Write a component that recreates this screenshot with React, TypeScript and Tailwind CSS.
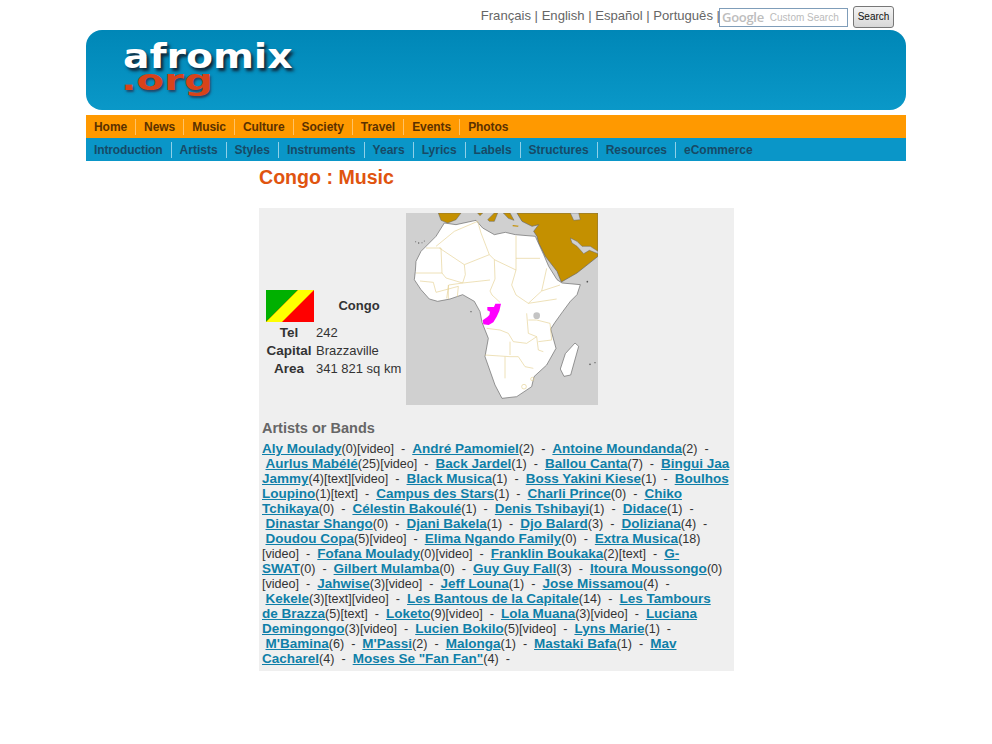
const languages = ['Français', 'English', 'Español', 'Português']
const mainMenu = ['Home', 'News', 'Music', 'Culture', 'Society', 'Travel', 'Events', 'Photos']
const subMenu = ['Introduction', 'Artists', 'Styles', 'Instruments', 'Years', 'Lyrics', 'Labels', 'Structures', 'Resources', 'eCommerce']

const artists: [string, string][] = [
  ['Aly Moulady', '(0)[video]'],
  ['André Pamomiel', '(2)'],
  ['Antoine Moundanda', '(2)'],
  ['Aurlus Mabélé', '(25)[video]'],
  ['Back Jardel', '(1)'],
  ['Ballou Canta', '(7)'],
  ['Bingui Jaa Jammy', '(4)[text][video]'],
  ['Black Musica', '(1)'],
  ['Boss Yakini Kiese', '(1)'],
  ['Boulhos Loupino', '(1)[text]'],
  ['Campus des Stars', '(1)'],
  ['Charli Prince', '(0)'],
  ['Chiko Tchikaya', '(0)'],
  ['Célestin Bakoulé', '(1)'],
  ['Denis Tshibayi', '(1)'],
  ['Didace', '(1)'],
  ['Dinastar Shango', '(0)'],
  ['Djani Bakela', '(1)'],
  ['Djo Balard', '(3)'],
  ['Doliziana', '(4)'],
  ['Doudou Copa', '(5)[video]'],
  ['Elima Ngando Family', '(0)'],
  ['Extra Musica', '(18)[video]'],
  ['Fofana Moulady', '(0)[video]'],
  ['Franklin Boukaka', '(2)[text]'],
  ['G-SWAT', '(0)'],
  ['Gilbert Mulamba', '(0)'],
  ['Guy Guy Fall', '(3)'],
  ['Itoura Moussongo', '(0)[video]'],
  ['Jahwise', '(3)[video]'],
  ['Jeff Louna', '(1)'],
  ['Jose Missamou', '(4)'],
  ['Kekele', '(3)[text][video]'],
  ['Les Bantous de la Capitale', '(14)'],
  ['Les Tambours de\u00a0Brazza', '(5)[text]'],
  ['Loketo', '(9)[video]'],
  ['Lola Muana', '(3)[video]'],
  ['Luciana Demingongo', '(3)[video]'],
  ['Lucien Bokilo', '(5)[video]'],
  ['Lyns Marie', '(1)'],
  ["M'Bamina", '(6)'],
  ["M'Passi", '(2)'],
  ['Malonga', '(1)'],
  ['Mastaki Bafa', '(1)'],
  ['Mav Cacharel', '(4)'],
  ['Moses Se "Fan Fan"', '(4)'],
]

function AfricaMap() {
  return (
    <svg viewBox="18 24 576 576" className="w-[192px] h-[192px] block shrink-0">
      <rect x="18" y="24" width="576" height="576" fill="#d0d0d0" />
      {/* Middle East and Europe */}
      <path d="M351 24 L594 24 L594 154 L531 204 L484 231 L471 199 L436 154 L416 114 L411 94 L401 79 L416 59 L396 64 L366 49 Z" fill="#c49000" stroke="#666" strokeWidth="2" />
      <path d="M511 99 L531 109 L546 124 L571 124 L594 139 L594 146 L568 136 L551 146 L531 124 L516 114 Z" fill="#d0d0d0" stroke="#666" strokeWidth="1.5" />
      <path d="M511 24 L536 24 L541 44 L521 46 Z" fill="#d0d0d0" stroke="#666" strokeWidth="1.5" />
      <path d="M115 24 L183 24 L168 44 L143 54 L123 46 Z" fill="#c49000" stroke="#666" strokeWidth="1.5" />
      <path d="M233 24 L248 24 L240 32 Z" fill="#c49000" stroke="#666" strokeWidth="1.5" />
      <path d="M263 44 L283 24 L293 24 L283 49 L268 49 Z" fill="#c49000" stroke="#666" strokeWidth="1.5" />
      <path d="M310 24 L330 24 L342 46 L325 40 Z" fill="#c49000" stroke="#666" strokeWidth="1.5" />
      <path d="M338 60 L356 62 L354 65 L338 64 Z" fill="#c49000" />
      {/* Africa */}
      <path
        d="M133 54 L168 59 L228 46 L248 69 L283 89 L316 82 L346 89 L406 94 L414 112 L431 149 L446 184 L471 224 L486 234 L541 239 L531 269 L511 289 L488 320 L465 352 L452 372 L468 430 L440 480 L402 515 L395 545 L350 575 L306 580 L285 540 L255 455 L265 400 L246 352 L240 320 L223 289 L188 269 L150 282 L113 289 L88 282 L63 254 L43 224 L46 199 L48 169 L63 139 L88 114 L108 94 Z"
        fill="#ffffff"
        stroke="#666"
        strokeWidth="2"
      />
      <path d="M525 414 L536 424 L512 510 L492 514 L481 492 L496 446 Z" fill="#ffffff" stroke="#666" strokeWidth="2" />
      {/* Islands */}
      <g fill="#555">
        <circle cx="47" cy="110" r="1.5" />
        <circle cx="56" cy="114" r="2" />
        <circle cx="66" cy="113" r="1.5" />
        <circle cx="73" cy="108" r="1.5" />
        <circle cx="570" cy="478" r="2.5" />
        <circle cx="585" cy="473" r="2" />
        <circle cx="562" cy="230" r="2.5" />
        <circle cx="213" cy="320" r="2" />
      </g>
      {/* Borders */}
      <g fill="none" stroke="#e6d196" strokeWidth="2">
        <path d="M108 124 L163 79 L233 49" />
        <path d="M118 129 L193 179 L268 149 L243 84 L233 49" />
        <path d="M78 129 L123 129 L126 204 L48 204" />
        <path d="M193 179 L196 209 L188 234 L146 240 L140 280" />
        <path d="M126 204 L138 219 L188 234 L270 225" />
        <path d="M268 149 L283 164 L285 222 L270 258 L276 270 L300 292" />
        <path d="M283 164 L348 195 L348 92" />
        <path d="M348 160 L420 160" />
        <path d="M348 195 L335 240 L348 270 L385 295 L470 282" />
        <path d="M385 295 L425 258 L480 240" />
        <path d="M425 258 L440 190" />
        <path d="M60 228 L100 232 L108 262 L175 244 L172 275" />
        <path d="M145 240 L145 282" />
        <path d="M260 370 L300 375 L325 385 L340 410 L380 415 L410 395 L415 435 L430 440" />
        <path d="M255 450 L330 455 L355 455 L375 485 L400 490" />
        <path d="M315 455 L315 520" />
        <path d="M330 410 L330 450" />
        <path d="M380 325 L385 385 L410 395" />
        <path d="M385 345 L410 345 L450 355 L455 405 L415 410" />
        <circle cx="372" cy="545" r="7" />
        <circle cx="397" cy="522" r="5" />
      </g>
      <circle cx="410" cy="332" r="10" fill="#c4c4c4" />
      {/* Congo */}
      <path d="M286 296 L303 296 L298 318 L290 335 L280 352 L266 360 L250 358 L248 346 L262 336 L268 330 L270 320 L262 316 L262 306 L282 306 Z" fill="#ff00ff" />
    </svg>
  )
}

function CountryFlag() {
  return (
    <svg viewBox="0 0 48 32" className="w-[48px] h-[32px] block">
      <rect width="48" height="32" fill="#ff0000" />
      <path d="M0 0 H32 L0 32 Z" fill="#00b000" />
      <path d="M32 0 H48 L16 32 H0 Z" fill="#ffff00" />
    </svg>
  )
}

export default function App() {
  return (
    <div className="w-[992px] min-h-[744px] bg-white font-['Liberation_Sans',Arial,sans-serif] text-[#333]">
      <div className="w-[820px] ml-[86px]">
        {/* Language bar + search */}
        <div className="h-[30px] flex justify-end items-start pr-[12px] pt-[6px]">
          <div className="text-[13.1px] leading-[20px] text-[#666] whitespace-pre mr-[-1px]">
            {languages.join(' | ')} |
          </div>
          <div className="w-[129px] h-[19px] mt-[2px] border border-[#7f9db9] flex items-center pl-[2px] bg-white overflow-hidden">
            <span className="text-[13px] leading-none text-[#bdbdbd] font-['Open_Sans',sans-serif] font-semibold tracking-[-0.3px]">Google</span>
            <span className="text-[10px] leading-none text-[#bbb] ml-[6px]">Custom Search</span>
          </div>
          <button className="w-[41px] h-[22px] ml-[5px] rounded-[3px] border border-[#777] bg-gradient-to-b from-[#f4f4f4] to-[#d8d8d8] text-[10px] leading-none text-[#111]">
            Search
          </button>
        </div>

        {/* Banner */}
        <div className="h-[80px] rounded-[16px] bg-gradient-to-b from-[#0087b7] to-[#0a98c8] pl-[37px] pt-[14px] font-['DejaVu_Sans',sans-serif] font-bold">
          <div className="w-fit text-[33px] leading-[26px] text-white origin-left scale-x-[1.19] [text-shadow:2px_3px_3px_#123]">afromix</div>
          <div className="w-fit text-[28px] leading-[22px] -ml-[2px] text-[#d8431a] origin-left scale-x-[1.44] [text-shadow:1px_2px_2px_#246]">.org</div>
        </div>

        {/* Menus */}
        <div className="mt-[5px] h-[23px] bg-[#ff9900] flex items-center text-[12px] tracking-[-0.06px] font-bold text-[#5b3100]">
          {mainMenu.map((item, i) => (
            <span key={item} className={`px-[8px] leading-[16px] ${i > 0 ? 'border-l border-[#ffc266]' : ''}`}>
              {item}
            </span>
          ))}
        </div>
        <div className="h-[23px] bg-[#0a96c8] flex items-center text-[12px] font-bold text-[#174a66]">
          {subMenu.map((item, i) => (
            <span key={item} className={`px-[8px] leading-[16px] ${i > 0 ? 'border-l border-[#8fd0e8]' : 'tracking-[-0.12px]'}`}>
              {item}
            </span>
          ))}
        </div>

        {/* Content */}
        <div className="ml-[173px] w-[475px]">
          <h1 className="text-[19.6px] leading-[24px] mt-[4px] mb-[19px] font-bold text-[#e0540f]">Congo : Music</h1>

          <div className="bg-[#efefef] pt-[5px] pb-[5px] px-[3px] h-[463px]">
            <div className="flex items-end">
              <div className="w-[144px] text-[13px] pl-[1px] pb-[27px]">
                <div className="flex items-center h-[36px] pl-[3px]">
                  <CountryFlag />
                  <div className="flex-1 text-center font-bold pr-[2px]">Congo</div>
                </div>
                <div className="grid grid-cols-[53px_1fr] leading-[18px]">
                  <div className="font-bold text-center text-[13.5px] pr-[1px]">Tel</div>
                  <div>242</div>
                  <div className="font-bold text-center text-[13.5px] pr-[1px]">Capital</div>
                  <div>Brazzaville</div>
                  <div className="font-bold text-center text-[13.5px] pr-[1px]">Area</div>
                  <div>341 821 sq km</div>
                </div>
              </div>
              <AfricaMap />
            </div>

            <h2 className="mt-[14px] mb-[5px] text-[14.5px] leading-[18px] font-bold text-[#666]">Artists or Bands</h2>
            <p className="text-[12.6px] leading-[15px]">
              {artists.map(([name, meta], i) => (
                <span key={name}>
                  {i > 0 && '\u00a0'}
                  <a href="#" className="font-bold text-[13.5px] leading-[12px] text-[#0e7fa8] underline">{name}</a>
                  {meta} {'\u00a0'}- {' '}
                </span>
              ))}
            </p>
          </div>
        </div>
      </div>
    </div>
  )
}
